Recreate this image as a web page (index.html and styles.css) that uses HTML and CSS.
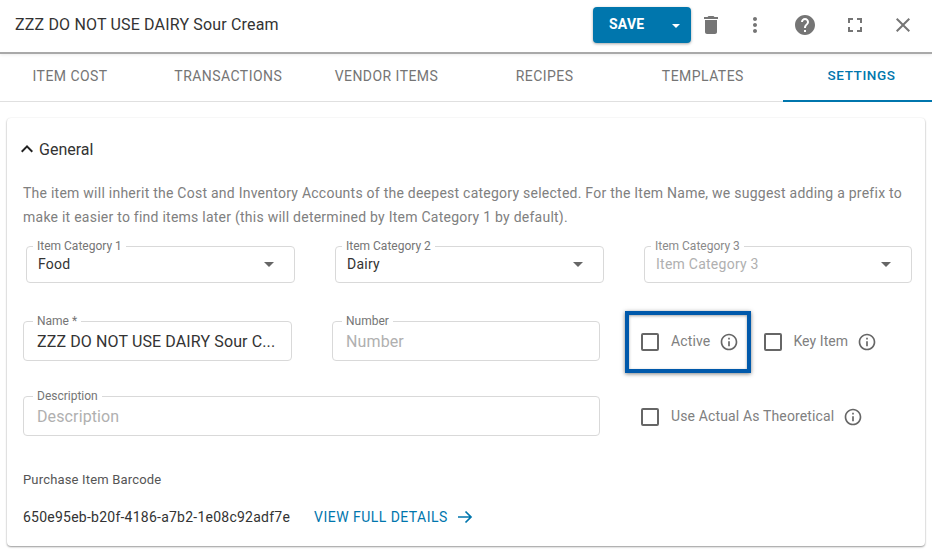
FILE: index.html
```html
<!DOCTYPE html>
<html lang="en">
<head>
<meta charset="utf-8">
<title>Item settings</title>
<link rel="stylesheet" href="styles.css">
</head>
<body>
<header class="topbar">
  <h1 class="title">ZZZ DO NOT USE DAIRY Sour Cream</h1>
  <div class="actions">
    <div class="save">
      <span class="save-label">SAVE</span>
      <span class="save-caret"></span>
    </div>
    <svg class="icon trash" viewBox="0 0 24 24"><path d="M6 19c0 1.1.9 2 2 2h8c1.1 0 2-.9 2-2V7H6v12zM19 4h-3.5l-1-1h-5l-1 1H5v2h14V4z"/></svg>
    <svg class="icon dots" viewBox="0 0 24 24"><path d="M12 8c1.1 0 2-.9 2-2s-.9-2-2-2-2 .9-2 2 .9 2 2 2zm0 2c-1.1 0-2 .9-2 2s.9 2 2 2 2-.9 2-2-.9-2-2-2zm0 6c-1.1 0-2 .9-2 2s.9 2 2 2 2-.9 2-2-.9-2-2-2z"/></svg>
    <svg class="icon help" viewBox="0 0 24 24"><path d="M12 2C6.48 2 2 6.48 2 12s4.48 10 10 10 10-4.48 10-10S17.52 2 12 2zm1 17h-2v-2h2v2zm2.07-7.75l-.9.92C13.45 12.9 13 13.5 13 15h-2v-.5c0-1.1.45-2.1 1.17-2.83l1.24-1.26c.37-.36.59-.86.59-1.41 0-1.1-.9-2-2-2s-2 .9-2 2H8c0-2.21 1.79-4 4-4s4 1.79 4 4c0 .88-.36 1.68-.93 2.25z"/></svg>
    <svg class="icon expand" viewBox="0 0 24 24"><path d="M7 14H5v5h5v-2H7v-3zm-2-4h2V7h3V5H5v5zm12 7h-3v2h5v-5h-2v3zM14 5v2h3v3h2V5h-5z"/></svg>
    <svg class="icon close" viewBox="0 0 24 24"><path d="M19 6.41L17.59 5 12 10.59 6.41 5 5 6.41 10.59 12 5 17.59 6.41 19 12 13.41 17.59 19 19 17.59 13.41 12z"/></svg>
  </div>
</header>

<nav class="tabs">
  <div class="tab">ITEM COST</div>
  <div class="tab">TRANSACTIONS</div>
  <div class="tab">VENDOR ITEMS</div>
  <div class="tab">RECIPES</div>
  <div class="tab">TEMPLATES</div>
  <div class="tab tab-active">SETTINGS</div>
</nav>

<main class="content">
  <section class="card">
    <div class="section-head">
      <svg class="chevron" viewBox="0 0 24 24"><path d="M12 8l-6 6 1.41 1.41L12 10.83l4.59 4.58L18 14z"/></svg>
      <span>General</span>
    </div>
    <p class="intro">The item will inherit the Cost and Inventory Accounts of the deepest category selected. For the Item Name, we suggest adding a prefix to make it easier to find items later (this will determined by Item Category 1 by default).</p>

    <div class="row-selects">
      <div class="field select">
        <span class="legend">Item Category 1</span>
        <span class="value">Food</span>
        <span class="caret"></span>
      </div>
      <div class="field select">
        <span class="legend">Item Category 2</span>
        <span class="value">Dairy</span>
        <span class="caret"></span>
      </div>
      <div class="field select select-last">
        <span class="legend muted">Item Category 3</span>
        <span class="value placeholder">Item Category 3</span>
        <span class="caret"></span>
      </div>
    </div>

    <div class="row-inputs">
      <div class="field input name">
        <span class="legend">Name *</span>
        <span class="value">ZZZ DO NOT USE DAIRY Sour C...</span>
      </div>
      <div class="field input number">
        <span class="legend">Number</span>
        <span class="value placeholder">Number</span>
      </div>
      <div class="checks">
        <label class="check active-check">
          <span class="box"></span><span class="check-label">Active</span>
          <svg class="info" viewBox="0 0 24 24"><path d="M11 7h2v2h-2zm0 4h2v6h-2zm1-9C6.48 2 2 6.48 2 12s4.48 10 10 10 10-4.48 10-10S17.52 2 12 2zm0 18c-4.41 0-8-3.59-8-8s3.59-8 8-8 8 3.59 8 8-3.59 8-8 8z"/></svg>
        </label>
        <label class="check key-check">
          <span class="box"></span><span class="check-label">Key Item</span>
          <svg class="info" viewBox="0 0 24 24"><path d="M11 7h2v2h-2zm0 4h2v6h-2zm1-9C6.48 2 2 6.48 2 12s4.48 10 10 10 10-4.48 10-10S17.52 2 12 2zm0 18c-4.41 0-8-3.59-8-8s3.59-8 8-8 8 3.59 8 8-3.59 8-8 8z"/></svg>
        </label>
      </div>
    </div>

    <div class="row-desc">
      <div class="field input description">
        <span class="legend">Description</span>
        <span class="value placeholder">Description</span>
      </div>
      <label class="check theoretical">
        <span class="box"></span><span class="check-label">Use Actual As Theoretical</span>
        <svg class="info" viewBox="0 0 24 24"><path d="M11 7h2v2h-2zm0 4h2v6h-2zm1-9C6.48 2 2 6.48 2 12s4.48 10 10 10 10-4.48 10-10S17.52 2 12 2zm0 18c-4.41 0-8-3.59-8-8s3.59-8 8-8 8 3.59 8 8-3.59 8-8 8z"/></svg>
      </label>
    </div>

    <div class="barcode-title">Purchase Item Barcode</div>
    <div class="barcode-row">
      <span class="barcode">650e95eb-b20f-4186-a7b2-1e08c92adf7e</span>
      <span class="details-link">VIEW FULL DETAILS</span>
      <svg class="arrow" viewBox="0 0 18 18"><path d="M2 9h13M9.500 3.500L15 9l-5.500 5.500" fill="none" stroke="currentColor" stroke-width="1.700"/></svg>
    </div>
  </section>
</main>

<div class="highlight"></div>
</body>
</html>
```
FILE: styles.css
```css
* { box-sizing: border-box; }
html, body { margin: 0; padding: 0; }
body {
  width: 932px;
  height: 552px;
  overflow: hidden;
  position: relative;
  background: #fff;
  font-family: Roboto, "Liberation Sans", sans-serif;
  color: #333;
}

.topbar {
  height: 54px;
  display: flex;
  align-items: center;
  justify-content: space-between;
  padding: 0 0 2px 15px;
  border-bottom: 2px solid #a9a9a9;
  box-shadow: 0 1px 3px rgba(0,0,0,.08);
}
.title {
  margin: 0 0 2px;
  font-size: 16px;
  font-weight: 400;
  color: #333;
  letter-spacing: .17px;
}
.actions { display: flex; align-items: center; position: relative; height: 36px; padding-right: 17px; }
.save {
  width: 98px;
  height: 36px;
  margin-right: 8px;
  background: #0076ad;
  border-radius: 4px;
  box-shadow: 0 1px 3px rgba(0,0,0,.35);
  display: flex;
  align-items: center;
  color: #fff;
  padding: 0 0 3px 16px;
}
.save-label { font-size: 14px; font-weight: 700; letter-spacing: .2px; }
.save-caret {
  margin-left: 28px;
  border-left: 4px solid transparent;
  border-right: 4px solid transparent;
  border-top: 4px solid #fff;
  margin-top: 4px;
}
.icon { fill: #757575; display: block; flex: none; }
.trash { width: 24px; height: 24px; }
.dots { width: 24px; height: 24px; margin-left: 20px; }
.help { width: 24px; height: 24px; margin-left: 26px; }
.expand { width: 24px; height: 24px; margin-left: 26px; }
.close { width: 24px; height: 24px; margin-left: 24px; }

.tabs {
  display: grid;
  grid-template-columns: repeat(6, 158.2px);
  height: 48px;
  margin-left: -9px;
  width: 941px;
  border-bottom: 1px solid #e0e0e0;
}
.tab {
  font-size: 14px;
  font-weight: 400;
  letter-spacing: .45px;
  color: #757575;
  display: flex;
  align-items: center;
  justify-content: center;
  padding-bottom: 4px;
}
.tab-active {
  font-weight: 500;
  font-size: 13.5px;
  letter-spacing: .6px;
  margin-left: 1px;
  color: #0076ad;
  border-bottom: 2px solid #0076ad;
  height: 48px;
}

.content { padding: 16px 7px 0; }
.card {
  width: 918px;
  height: 428px;
  background: #fff;
  border-radius: 4px;
  box-shadow: 0 1px 2px rgba(0,0,0,.4), 0 0 2px rgba(0,0,0,.06);
  padding: 19px 16px 0;
}
.section-head {
  display: flex;
  align-items: center;
  height: 24px;
  margin-left: -8px;
  font-size: 16px;
  color: #333;
}
.chevron { width: 24px; height: 24px; fill: #222; flex: none; }
.intro {
  margin: 20px 0 0;
  width: 890px;
  font-size: 14px;
  line-height: 24px;
  color: #808080;
  letter-spacing: .245px;
}

.field {
  position: relative;
  border: 1px solid #d9d9d9;
  border-radius: 4px;
  display: flex;
  align-items: center;
  flex: none;
}
.legend {
  position: absolute;
  top: -8px;
  left: 6px;
  padding: 0 4px;
  background: #fff;
  font-size: 12px;
  line-height: 14px;
  color: #757575;
}
.input .legend { left: 9px; }
.legend.muted { color: #8a8a8a; }
.value { font-size: 14px; color: #333; letter-spacing: .2px; }
.placeholder { color: #b0b0b0; }

.row-selects { display: flex; gap: 40px; margin: 17px 0 0 3px; }
.select { width: 269px; height: 37px; padding: 0 11px 1px; }
.select-last { width: 268px; }
.select .value { font-size: 14px; letter-spacing: .25px; }
.caret {
  margin-left: auto;
  margin-right: 9px;
  border-left: 5px solid transparent;
  border-right: 5px solid transparent;
  border-top: 5px solid #666;
}

.row-inputs { display: flex; margin-top: 38px; height: 40px; align-items: center; }
.input { height: 40px; padding: 0 13px; }
.input .value { font-size: 16px; letter-spacing: .12px; }
.name { width: 269px; }
.number { width: 268px; margin-left: 40px; }

.checks { display: flex; margin-left: 41px; }
.check { display: flex; align-items: center; flex: none; }
.box {
  width: 18px;
  height: 18px;
  margin-top: 2px;
  border: 2px solid #666;
  border-radius: 2px;
  flex: none;
}
.check-label { margin-left: 12px; font-size: 14px; color: #808080; letter-spacing: .14px; }
.info { width: 20px; height: 20px; fill: #666; margin: 2px 0 0 9px; flex: none; }
.key-check { margin-left: 25px; }
.key-check .check-label { margin-left: 11px; letter-spacing: .08px; }

.row-desc { display: flex; align-items: center; margin-top: 35px; height: 40px; }
.description { width: 577px; }
.theoretical { margin-left: 41px; }

.barcode-title { margin-top: 35px; font-size: 13px; line-height: 18px; color: #555; letter-spacing: .17px; }
.barcode-row { display: flex; align-items: center; margin-top: 16px; height: 24px; }
.barcode { font-size: 14px; color: #333; letter-spacing: .24px; }
.details-link { margin-left: 24px; font-size: 14px; font-weight: 400; color: #0076ad; letter-spacing: .46px; }
.arrow { width: 18px; height: 18px; color: #0076ad; margin-left: 8px; }

.highlight {
  position: absolute;
  left: 625px;
  top: 311px;
  width: 126px;
  height: 62px;
  border: 4px solid #0059ab;
  box-shadow: 0 1px 4px rgba(0,0,0,.5), inset 0 1px 3px rgba(0,0,0,.35);
  pointer-events: none;
}
```
